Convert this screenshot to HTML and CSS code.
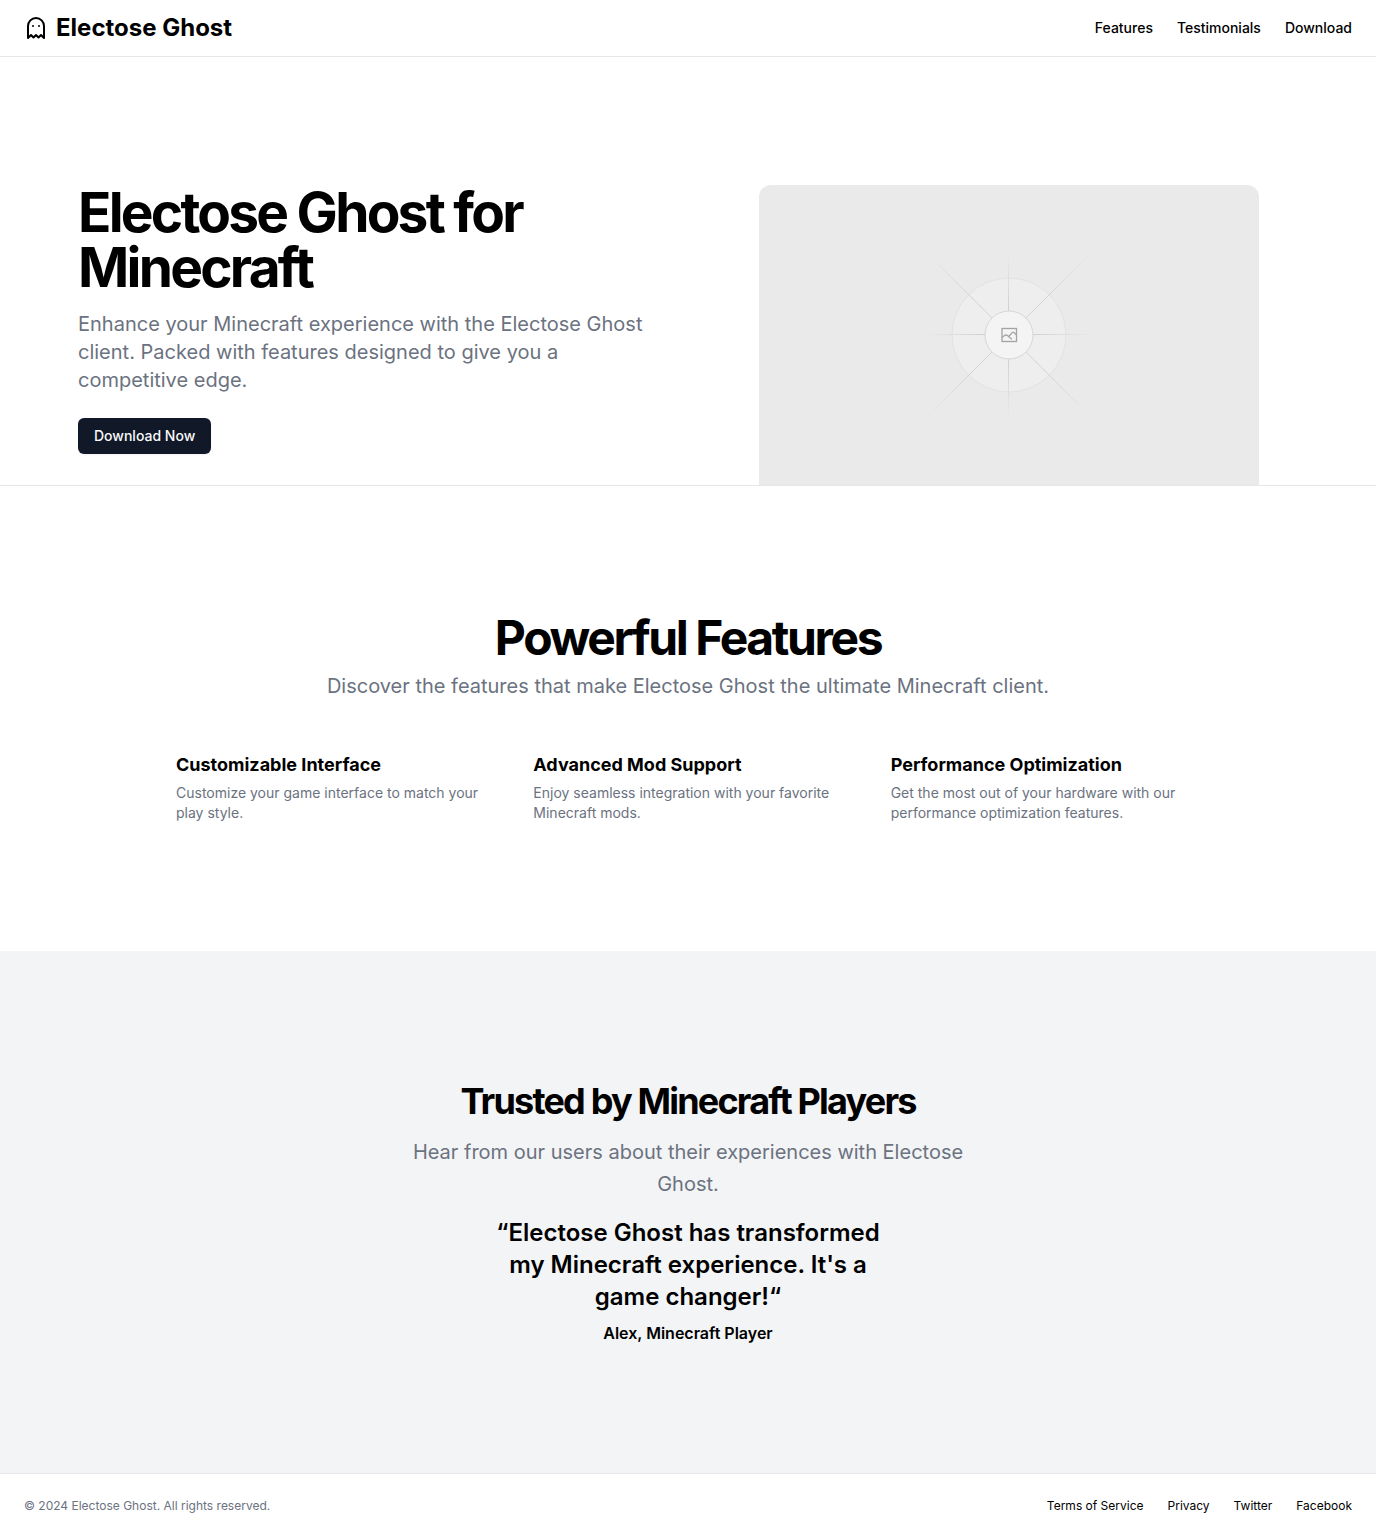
FILE: index.html
```html
<!DOCTYPE html>
<html lang="en">
<head>
  <meta charset="utf-8">
  <meta name="viewport" content="width=device-width, initial-scale=1">
  <title>Electose Ghost</title>
  <link rel="stylesheet" href="styles.css">
</head>
<body>
  <header class="site-header">
    <a class="brand" href="#">
      <svg class="brand-icon" viewBox="0 0 24 24" width="24" height="24" fill="none" stroke="currentColor" stroke-width="2" stroke-linecap="round" stroke-linejoin="round" aria-hidden="true">
        <path d="M9 10h.01"/>
        <path d="M15 10h.01"/>
        <path d="M12 2a8 8 0 0 0-8 8v12l3-3 2.5 2.5L12 19l2.5 2.5L17 19l3 3V10a8 8 0 0 0-8-8z"/>
      </svg>
      <span>Electose Ghost</span>
    </a>
    <nav class="site-nav" aria-label="Main">
      <a href="#features">Features</a>
      <a href="#testimonials">Testimonials</a>
      <a href="#download">Download</a>
    </nav>
  </header>

  <main>
    <section class="hero" id="download">
      <div class="hero-inner">
        <div class="hero-copy">
          <h1>Electose Ghost for Minecraft</h1>
          <p class="lead">Enhance your Minecraft experience with the Electose Ghost client. Packed with features designed to give you a competitive edge.</p>
          <button class="button" type="button">Download Now</button>
        </div>
        <svg class="hero-image" viewBox="0 0 500 300" role="img" aria-label="Hero">
          <defs>
            <radialGradient id="fade" gradientUnits="userSpaceOnUse" cx="250" cy="150" r="84">
              <stop offset="0.3" stop-color="#d0d0d0"/>
              <stop offset="1" stop-color="#d0d0d0" stop-opacity="0"/>
            </radialGradient>
            <radialGradient id="fade-long" gradientUnits="userSpaceOnUse" cx="250" cy="150" r="116">
              <stop offset="0.5" stop-color="#d4d4d4"/>
              <stop offset="1" stop-color="#d4d4d4" stop-opacity="0"/>
            </radialGradient>
          </defs>
          <rect width="500" height="300" fill="#eaeaea"/>
          <circle cx="250" cy="150" r="57" fill="#eeeeee" stroke="#e2e2e2"/>
          <g fill="url(#fade)">
            <rect x="166" y="149" width="168" height="1"/>
            <rect x="249" y="66" width="1" height="168"/>
          </g>
          <g stroke="url(#fade-long)">
            <path d="M168 68 332 232"/>
            <path d="M168 232 332 68"/>
          </g>
          <circle cx="250" cy="150" r="24" fill="#f4f4f4" stroke="#d6d6d6"/>
          <g fill="none" stroke="#a3a3a3" stroke-width="1.3">
            <rect x="243" y="143.500" width="14.500" height="13"/>
            <path d="M243 152.500l2.500-2q1.500-1 3 0l2.500 2.200 2 1.500M250 151.200l3.200-3.600q1-1 2 0l2.300 2.400"/>
          </g>
        </svg>
      </div>
    </section>

    <section class="features" id="features">
      <div class="features-intro">
        <h2>Powerful Features</h2>
        <p>Discover the features that make Electose Ghost the ultimate Minecraft client.</p>
      </div>
      <div class="feature-grid">
        <article class="feature">
          <h3>Customizable Interface</h3>
          <p>Customize your game interface to match your play style.</p>
        </article>
        <article class="feature">
          <h3>Advanced Mod Support</h3>
          <p>Enjoy seamless integration with your favorite Minecraft mods.</p>
        </article>
        <article class="feature">
          <h3>Performance Optimization</h3>
          <p>Get the most out of your hardware with our performance optimization features.</p>
        </article>
      </div>
    </section>

    <section class="testimonials" id="testimonials">
      <h2>Trusted by Minecraft Players</h2>
      <p class="testimonials-intro">Hear from our users about their experiences with Electose Ghost.</p>
      <figure class="testimonial">
        <blockquote>“Electose Ghost has transformed my Minecraft experience. It's a game changer!“</blockquote>
        <figcaption>Alex, Minecraft Player</figcaption>
      </figure>
    </section>
  </main>

  <footer class="site-footer">
    <p>© 2024 Electose Ghost. All rights reserved.</p>
    <nav class="footer-nav" aria-label="Footer">
      <a href="#">Terms of Service</a>
      <a href="#">Privacy</a>
      <a href="#">Twitter</a>
      <a href="#">Facebook</a>
    </nav>
  </footer>
</body>
</html>
```
FILE: styles.css
```css
*,
*::before,
*::after {
  box-sizing: border-box;
}

body,
h1,
h2,
h3,
p,
figure,
blockquote {
  margin: 0;
}

body {
  font-family: Inter, "Liberation Sans", sans-serif;
  font-size: 16px;
  line-height: 24px;
  color: #000;
  background: #fff;
}

a {
  color: inherit;
  text-decoration: none;
}

a:hover {
  text-decoration: underline;
}

/* Header */
.site-header {
  display: flex;
  align-items: center;
  justify-content: space-between;
  padding: 12px 24px;
  border-bottom: 1px solid #e5e7eb;
}

.brand {
  display: flex;
  align-items: center;
  gap: 8px;
  font-size: 24px;
  line-height: 32px;
  font-weight: 700;
}

.site-nav {
  display: flex;
  gap: 24px;
  font-size: 14px;
  line-height: 20px;
  font-weight: 500;
}

/* Hero */
.hero {
  padding-top: 128px;
  border-bottom: 1px solid #e5e7eb;
}

.hero-inner {
  display: grid;
  grid-template-columns: 1fr 1fr;
  gap: 64px;
  max-width: 1300px;
  margin: 0 auto;
  padding: 0 40px;
}

.hero h1 {
  font-size: 55px;
  line-height: 55px;
  font-weight: 700;
  letter-spacing: -0.05em;
}

.lead {
  margin: 15px 0 24px;
  font-size: 20px;
  line-height: 28px;
  color: #6b7280;
}

.button {
  padding: 8px 16px;
  border: 0;
  border-radius: 6px;
  background: #111827;
  color: #f9fafb;
  font: 500 14px/20px Inter, "Liberation Sans", sans-serif;
  box-shadow: 0 1px 2px rgba(0, 0, 0, 0.05);
  cursor: pointer;
}

.hero-image {
  display: block;
  width: 100%;
  max-width: 500px;
  margin: 0 auto;
  border-radius: 12px 12px 0 0;
}

/* Features */
.features {
  padding: 128px 24px;
}

.features-intro {
  display: grid;
  gap: 8px;
  text-align: center;
}

.features-intro h2 {
  font-size: 48px;
  line-height: 48px;
  font-weight: 700;
  letter-spacing: -0.05em;
}

.features-intro p {
  font-size: 20px;
  line-height: 33px;
  color: #6b7280;
}

.feature-grid {
  display: grid;
  grid-template-columns: repeat(3, 1fr);
  gap: 48px;
  max-width: 1024px;
  margin: 48px auto 0;
}

.feature {
  display: grid;
  align-content: start;
  gap: 4px;
}

.feature h3 {
  font-size: 18px;
  line-height: 28px;
  font-weight: 700;
}

.feature p {
  font-size: 14px;
  line-height: 20px;
  color: #6b7280;
}

/* Testimonials */
.testimonials {
  display: flex;
  flex-direction: column;
  align-items: center;
  padding: 128px 24px;
  background: #f3f4f6;
  text-align: center;
}

.testimonials h2 {
  font-size: 36px;
  line-height: 45px;
  font-weight: 700;
  letter-spacing: -0.05em;
}

.testimonials-intro {
  max-width: 600px;
  margin: 12px 0 17px;
  font-size: 20px;
  line-height: 32px;
  color: #6b7280;
}

.testimonial {
  display: grid;
  gap: 8px;
  max-width: 400px;
  font-weight: 600;
}

.testimonial blockquote {
  font-size: 24px;
  line-height: 32px;
}

/* Footer */
.site-footer {
  display: flex;
  align-items: center;
  justify-content: space-between;
  padding: 24px;
  border-top: 1px solid #e5e7eb;
  font-size: 12px;
  line-height: 16px;
}

.site-footer p {
  color: #6b7280;
}

.footer-nav {
  display: flex;
  gap: 24px;
}

@media (max-width: 760px) {
  .hero-inner,
  .feature-grid {
    grid-template-columns: 1fr;
  }

  .site-footer {
    flex-direction: column;
    gap: 16px;
  }
}
```
